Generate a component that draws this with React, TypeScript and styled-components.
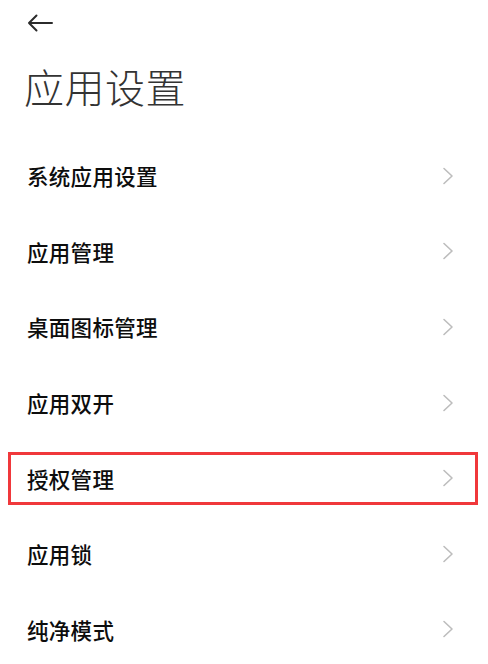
import React from 'react';
import styled, { createGlobalStyle } from 'styled-components';

const GlobalStyle = createGlobalStyle`
  body {
    margin: 0;
    background: #fff;
    font-family: 'Noto Sans CJK SC', 'Noto Sans', sans-serif;
  }
`;

const Page = styled.div`
  width: 488px;
  height: 664px;
  overflow: hidden;
  background: #fff;
`;

const TopBar = styled.div`
  height: 46px;
  display: flex;
  align-items: center;
  padding-left: 27px;
`;

const BackButton = styled.button`
  border: 0;
  background: none;
  padding: 0;
  display: flex;
  color: #2b2b2b;
`;

const Title = styled.h1`
  margin: 12px 0 0;
  padding-left: 24px;
  font-size: 40px;
  line-height: 56px;
  font-weight: 300;
  color: #333;
  letter-spacing: 0.5px;
`;

const List = styled.ul`
  list-style: none;
  margin: 24px 0 0;
  padding: 0;
`;

const Row = styled.li`
  height: 75.6px;
  display: flex;
  align-items: center;
  padding: 0 10px 0 8px;
`;

const RowInner = styled.div<{ $highlighted?: boolean }>`
  flex: 1;
  height: 53px;
  box-sizing: border-box;
  display: flex;
  align-items: center;
  justify-content: space-between;
  padding: 0 21px 0 16px;
  border: 3px solid ${p => (p.$highlighted ? '#f0383b' : 'transparent')};
`;

const Label = styled.span`
  font-size: 21.5px;
  font-weight: 500;
  color: #0d0d0d;
  letter-spacing: 0.3px;
`;

const Chevron = () => (
  <svg width="12" height="18" viewBox="0 0 12 18" fill="none">
    <path d="M2 1.5 L10 9 L2 16.5" stroke="#bdbdbd" strokeWidth="1.6" strokeLinecap="round" strokeLinejoin="round" />
  </svg>
);

const items = ['系统应用设置', '应用管理', '桌面图标管理', '应用双开', '授权管理', '应用锁', '纯净模式'];

const App = () => (
  <Page>
    <GlobalStyle />
    <TopBar>
      <BackButton aria-label="返回">
        <svg width="26" height="18" viewBox="0 0 26 18" fill="none">
          <path d="M25 9 H2 M9.5 1.5 L2 9 L9.5 16.5" stroke="currentColor" strokeWidth="2" strokeLinecap="round" strokeLinejoin="round" />
        </svg>
      </BackButton>
    </TopBar>
    <Title>应用设置</Title>
    <List>
      {items.map(item => (
        <Row key={item}>
          <RowInner $highlighted={item === '授权管理'}>
            <Label>{item}</Label>
            <Chevron />
          </RowInner>
        </Row>
      ))}
    </List>
  </Page>
);

export default App;
